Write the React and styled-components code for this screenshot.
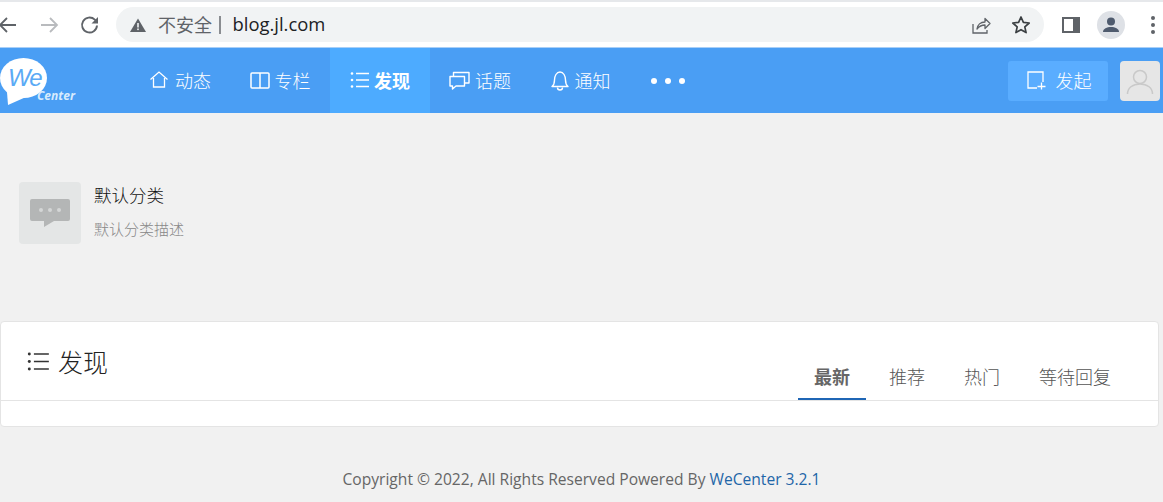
import React from "react";
import styled, { createGlobalStyle } from "styled-components";

const navItems = [
   { label: "动态", icon: "home", gap: 6 },
   { label: "专栏", icon: "columns", gap: 5 },
   { label: "发现", icon: "list", gap: 4, active: true },
   { label: "话题", icon: "topic", gap: 5 },
   { label: "通知", icon: "bell", gap: 5 },
];

const tabs = [
   { label: "最新", active: true },
   { label: "推荐" },
   { label: "热门" },
   { label: "等待回复" },
];

function NavIcon({ name }) {
   if (name === "home") {
      return (
         <svg width="20" height="20" viewBox="0 0 20 20" fill="none" stroke="#fff" strokeWidth="1.3">
            <path d="M1.500 9.500 10 2l8.500 7.500" />
            <path d="M4.500 8v9h11V8" />
         </svg>
      );
   }
   if (name === "columns") {
      return (
         <svg width="20" height="20" viewBox="0 0 20 20" fill="none" stroke="#fff" strokeWidth="1.5">
            <rect x="1" y="3" width="18" height="15" rx="1" />
            <path d="M10 3v15" />
         </svg>
      );
   }
   if (name === "list") return <ListIcon size={20} color="#fff" />;
   if (name === "topic") {
      return (
         <svg width="21" height="20" viewBox="0 0 21 20" fill="none" stroke="#fff" strokeWidth="1.4">
            <path d="M1 6.500h14.500v9.500H7l-3.500 3v-3H1z" strokeLinejoin="round" />
            <path d="M4.500 6.500V2.500h15.500v10.500h-4.500" strokeLinejoin="round" />
         </svg>
      );
   }
   return (
      <svg width="20" height="22" viewBox="0 0 20 22" fill="none" stroke="#fff" strokeWidth="1.4">
         <path d="M2 17.500c2-1.500 2.500-3 2.500-6.500 0-4 2-8 5.500-8s5.500 4 5.500 8c0 3.500.5 5 2.500 6.500z" strokeLinejoin="round" />
         <path d="M7.500 18.500a2.500 2.500 0 0 0 5 0" />
      </svg>
   );
}

function ListIcon({ size, color }) {
   return (
      <svg width={size} height={size} viewBox="0 0 20 20" fill="none" stroke={color} strokeWidth="1.400">
         <circle cx="2" cy="3.500" r="1.300" fill={color} stroke="none" />
         <circle cx="2" cy="10" r="1.300" fill={color} stroke="none" />
         <circle cx="2" cy="16.500" r="1.300" fill={color} stroke="none" />
         <path d="M6 3.500h13M6 10h13M6 16.500h13" />
      </svg>
   );
}

export default function App() {
   return (
      <React.Fragment>
         <GlobalStyle />
         <BrowserBar>
            <BrowserButtons>
               <svg width="20" height="20" viewBox="0 0 20 20" fill="none" stroke="#5f6368" strokeWidth="1.800">
                  <path d="M18 10H2M9 3l-7 7 7 7" transform="translate(-2 0)" />
               </svg>
               <svg width="20" height="20" viewBox="0 0 20 20" fill="none" stroke="#b9bbbe" strokeWidth="1.800">
                  <path d="M1 10h16M10 3l7 7-7 7" />
               </svg>
               <svg width="20" height="20" viewBox="0 0 20 20" fill="none" stroke="#5f6368" strokeWidth="1.900">
                  <path d="M17 10.500a7.500 7.500 0 1 1-2.200-5.800l2.500 2.500" />
                  <path d="M18 2v6.500h-6.500" fill="#5f6368" stroke="none" />
               </svg>
            </BrowserButtons>
            <AddressBar>
               <svg width="18" height="16" viewBox="0 0 18 16">
                  <path d="M9 1.500 17 15H1z" fill="#5f6368" />
                  <rect x="8.200" y="6" width="1.600" height="4.500" fill="#f1f3f4" />
                  <rect x="8.200" y="11.500" width="1.600" height="1.600" fill="#f1f3f4" />
               </svg>
               <Insecure>不安全</Insecure>
               <AddressDivider />
               <Url>blog.jl.com</Url>
               <AddressActions>
                  <svg width="20" height="20" viewBox="0 0 20 20" fill="none" stroke="#5f6368" strokeWidth="1.300">
                     <path d="M2 9v9h14v-3" />
                     <path d="M6 14c.5-4 3.500-7 8-7V3.500l5 5-5 5V10c-3.500 0-6 1.500-8 4z" strokeLinejoin="round" />
                  </svg>
                  <svg width="20" height="20" viewBox="0 0 20 20" fill="none" stroke="#3c4043" strokeWidth="1.700">
                     <path d="m10 2 2.400 5.400 5.800.6-4.400 3.900 1.300 5.700L10 14.700l-5.100 2.900 1.300-5.700L1.800 8l5.800-.6z" strokeLinejoin="round" />
                  </svg>
               </AddressActions>
            </AddressBar>
            <BrowserTools>
               <svg width="18" height="16" viewBox="0 0 18 16">
                  <path d="M0 0h18v16H0z" fill="#5f6368" />
                  <path d="M2 2h9v12H2z" fill="#fff" />
               </svg>
               <Profile>
                  <svg width="20" height="20" viewBox="0 0 20 20" fill="#4f5b6e">
                     <circle cx="10" cy="6.500" r="4" />
                     <path d="M2 17c0-3.500 4-5 8-5s8 1.500 8 5z" />
                  </svg>
               </Profile>
               <Dots />
            </BrowserTools>
         </BrowserBar>

         <Nav>
            <Logo>
               <svg width="76" height="58" viewBox="0 0 76 58">
                  <ellipse cx="23.500" cy="28" rx="23.500" ry="20" fill="#fff" />
                  <path d="M7 42 8 55 26 47z" fill="#fff" />
               </svg>
               <LogoWe>We</LogoWe>
               <LogoCenter>Center</LogoCenter>
            </Logo>
            <NavList>
               {navItems.map((item) => (
                  <NavItem key={item.label} $active={item.active} $gap={item.gap}>
                     <NavIcon name={item.icon} />
                     {item.label}
                  </NavItem>
               ))}
               <NavMore>
                  <span />
                  <span />
                  <span />
               </NavMore>
            </NavList>
            <PublishButton>
               <svg width="20" height="20" viewBox="0 0 20 20" fill="none" stroke="#fff" strokeWidth="1.300">
                  <path d="M11 18H2V2h15v10" />
                  <path d="M11.500 16.500h8M15.500 12.500v7" />
               </svg>
               发起
            </PublishButton>
            <Avatar>
               <svg width="28" height="28" viewBox="0 0 28 28" fill="none" stroke="#c9c9c9" strokeWidth="1.500">
                  <circle cx="14" cy="9" r="6.500" />
                  <path d="M1.500 26c0-6 5-10 12.500-10s12.500 4 12.500 10" />
               </svg>
            </Avatar>
         </Nav>

         <Category>
            <CategoryThumb>
               <svg width="40" height="28" viewBox="0 0 40 28">
                  <path d="M2 0h36a2 2 0 0 1 2 2v18a2 2 0 0 1-2 2H24l-10 6v-6H2a2 2 0 0 1-2-2V2a2 2 0 0 1 2-2z" fill="#b4b6b6" />
                  <circle cx="11" cy="11" r="2" fill="#d4d6d6" />
                  <circle cx="20" cy="11" r="2" fill="#d4d6d6" />
                  <circle cx="29" cy="11" r="2" fill="#d4d6d6" />
               </svg>
            </CategoryThumb>
            <CategoryText>
               <CategoryName>默认分类</CategoryName>
               <CategoryDesc>默认分类描述</CategoryDesc>
            </CategoryText>
         </Category>

         <Card>
            <CardHead>
               <CardTitle>
                  <ListIcon size={23} color="#333" />
                  发现
               </CardTitle>
               <Tabs>
                  {tabs.map((tab) => (
                     <Tab key={tab.label} $active={tab.active}>
                        {tab.label}
                     </Tab>
                  ))}
               </Tabs>
            </CardHead>
         </Card>

         <Footer>
            Copyright © 2022, All Rights Reserved Powered By <FooterLink>WeCenter 3.2.1</FooterLink>
         </Footer>
      </React.Fragment>
   );
}

const cjk = `"Noto Sans CJK SC", "Noto Sans", sans-serif`;

const GlobalStyle = createGlobalStyle`
   html, body {
      margin: 0;
      padding: 0;
      background-color: #f1f1f1;
      font-family: "Open Sans", ${cjk};
   }
`;

const BrowserBar = styled.div`
   height: 45px;
   display: flex;
   align-items: center;
   background-color: #fff;
   border-top: 2px solid #e6e8eb;
   box-sizing: content-box;
`;

const BrowserButtons = styled.div`
   width: 116px;
   flex-shrink: 0;
   display: flex;
   gap: 20px;
   align-items: center;
`;

const AddressBar = styled.div`
   width: 928px;
   height: 35px;
   flex-shrink: 0;
   display: flex;
   align-items: center;
   padding-left: 13px;
   box-sizing: border-box;
   border-radius: 18px;
   background-color: #f1f3f4;
`;

const Insecure = styled.span`
   margin-left: 11px;
   padding-bottom: 2px;
   font-size: 18px;
   line-height: 24px;
   color: #5f6368;
   font-family: ${cjk};
`;

const AddressDivider = styled.span`
   width: 1.500px;
   height: 18px;
   margin-left: 7px;
   background-color: #8a8d91;
`;

const Url = styled.span`
   margin-left: 12px;
   padding-bottom: 2px;
   font-size: 18.400px;
   line-height: 24px;
   color: #202124;
   font-family: "Open Sans", sans-serif;
`;

const AddressActions = styled.div`
   margin-left: auto;
   margin-right: 13px;
   display: flex;
   gap: 20px;
   align-items: center;
`;

const BrowserTools = styled.div`
   flex: 1;
   display: flex;
   align-items: center;
   padding-left: 18px;
   gap: 17px;
`;

const Profile = styled.div`
   width: 28px;
   height: 28px;
   display: flex;
   align-items: center;
   justify-content: center;
   border-radius: 50%;
   background-color: #dee1e6;
`;

const Dots = styled.span`
   width: 4px;
   height: 4px;
   margin-left: 9px;
   border-radius: 50%;
   background-color: #5f6368;
   box-shadow: 0 -7px 0 #5f6368, 0 7px 0 #5f6368;
`;

const Nav = styled.nav`
   height: 66px;
   display: flex;
   align-items: center;
   padding-right: 3px;
   background-color: #4a9ef4;
   border-top: 1px solid #a9cff7;
   box-sizing: border-box;
`;

const Logo = styled.div`
   width: 130px;
   height: 65px;
   flex-shrink: 0;
   position: relative;

   svg {
      display: block;
      margin-top: 2px;
   }
`;

const LogoWe = styled.span`
   position: absolute;
   left: 8px;
   top: 13px;
   font-size: 24px;
   line-height: 34px;
   letter-spacing: -1px;
   font-style: italic;
   color: #5aaaf5;
   font-family: "Liberation Sans", sans-serif;
`;

const LogoCenter = styled.span`
   position: absolute;
   left: 37px;
   top: 41px;
   font-size: 12px;
   line-height: 14px;
   font-weight: bold;
   font-style: italic;
   color: #d8ebfd;
   font-family: "Open Sans", sans-serif;
`;

const NavList = styled.div`
   display: flex;
   height: 65px;
   align-items: stretch;
`;

const NavItem = styled.div`
   width: 100px;
   display: flex;
   align-items: center;
   justify-content: center;
   gap: ${(props) => props.$gap}px;
   padding-bottom: 2px;
   box-sizing: border-box;
   font-size: 18px;
   color: #fff;
   font-family: ${cjk};
   font-weight: ${(props) => (props.$active ? "bold" : "300")};
   background-color: ${(props) => (props.$active ? "#4dabff" : "transparent")};
`;

const NavMore = styled.div`
   display: flex;
   align-items: center;
   gap: 8px;
   margin-left: 21px;

   span {
      width: 6px;
      height: 6px;
      border-radius: 50%;
      background-color: #fff;
   }
`;

const PublishButton = styled.div`
   width: 100px;
   height: 40px;
   margin-left: auto;
   padding: 0 0 1px 1px;
   display: flex;
   align-items: center;
   justify-content: center;
   gap: 10px;
   box-sizing: border-box;
   font-size: 18px;
   font-weight: 300;
   color: #fff;
   font-family: ${cjk};
   border-radius: 3px;
   background-color: #5aadff;
`;

const Avatar = styled.div`
   width: 40px;
   height: 40px;
   margin-left: 12px;
   display: flex;
   align-items: flex-end;
   justify-content: center;
   padding-bottom: 5px;
   box-sizing: border-box;
   border-radius: 4px;
   background-color: #e6e6e6;
`;

const Category = styled.section`
   display: flex;
   gap: 13px;
   padding: 69px 19px 77px;
`;

const CategoryThumb = styled.div`
   width: 62px;
   height: 62px;
   display: flex;
   align-items: center;
   justify-content: center;
   border-radius: 4px;
   background-color: #e4e6e6;
`;

const CategoryText = styled.div`
   display: flex;
   flex-direction: column;
   font-family: ${cjk};
`;

const CategoryName = styled.div`
   font-size: 17.500px;
   line-height: 26px;
   font-weight: 300;
   color: #111;
`;

const CategoryDesc = styled.div`
   margin-top: 11px;
   font-size: 15px;
   line-height: 20px;
   font-weight: 300;
   color: #888;
`;

const Card = styled.section`
   width: 1159px;
   height: 106px;
   box-sizing: border-box;
   border: 1px solid #e4e4e4;
   border-radius: 4px;
   background-color: #fff;
`;

const CardHead = styled.div`
   height: 79px;
   display: flex;
   align-items: flex-end;
   justify-content: space-between;
   box-sizing: border-box;
   padding: 0 31px 0 26px;
   border-bottom: 1px solid #e4e4e4;
`;

const CardTitle = styled.h2`
   margin: 0 0 19px;
   display: flex;
   align-items: center;
   gap: 8px;
   font-size: 25px;
   line-height: 40px;
   font-weight: 300;
   color: #222;
   font-family: ${cjk};
`;

const Tabs = styled.div`
   display: flex;
   align-items: flex-end;
   gap: 7px;
`;

const Tab = styled.div`
   height: 44px;
   line-height: 40px;
   padding: 0 16px;
   box-sizing: border-box;
   font-size: 18px;
   color: ${(props) => (props.$active ? "#666" : "#555")};
   font-family: ${cjk};
   font-weight: ${(props) => (props.$active ? "bold" : "300")};
   border-bottom: ${(props) => (props.$active ? "2px solid #1f66b5" : "none")};
`;

const Footer = styled.footer`
   padding-top: 42px;
   height: 75px;
   box-sizing: border-box;
   text-align: center;
   font-size: 15.600px;
   line-height: 20px;
   color: #666;
`;

const FooterLink = styled.span`
   color: #1f66a8;
`;
